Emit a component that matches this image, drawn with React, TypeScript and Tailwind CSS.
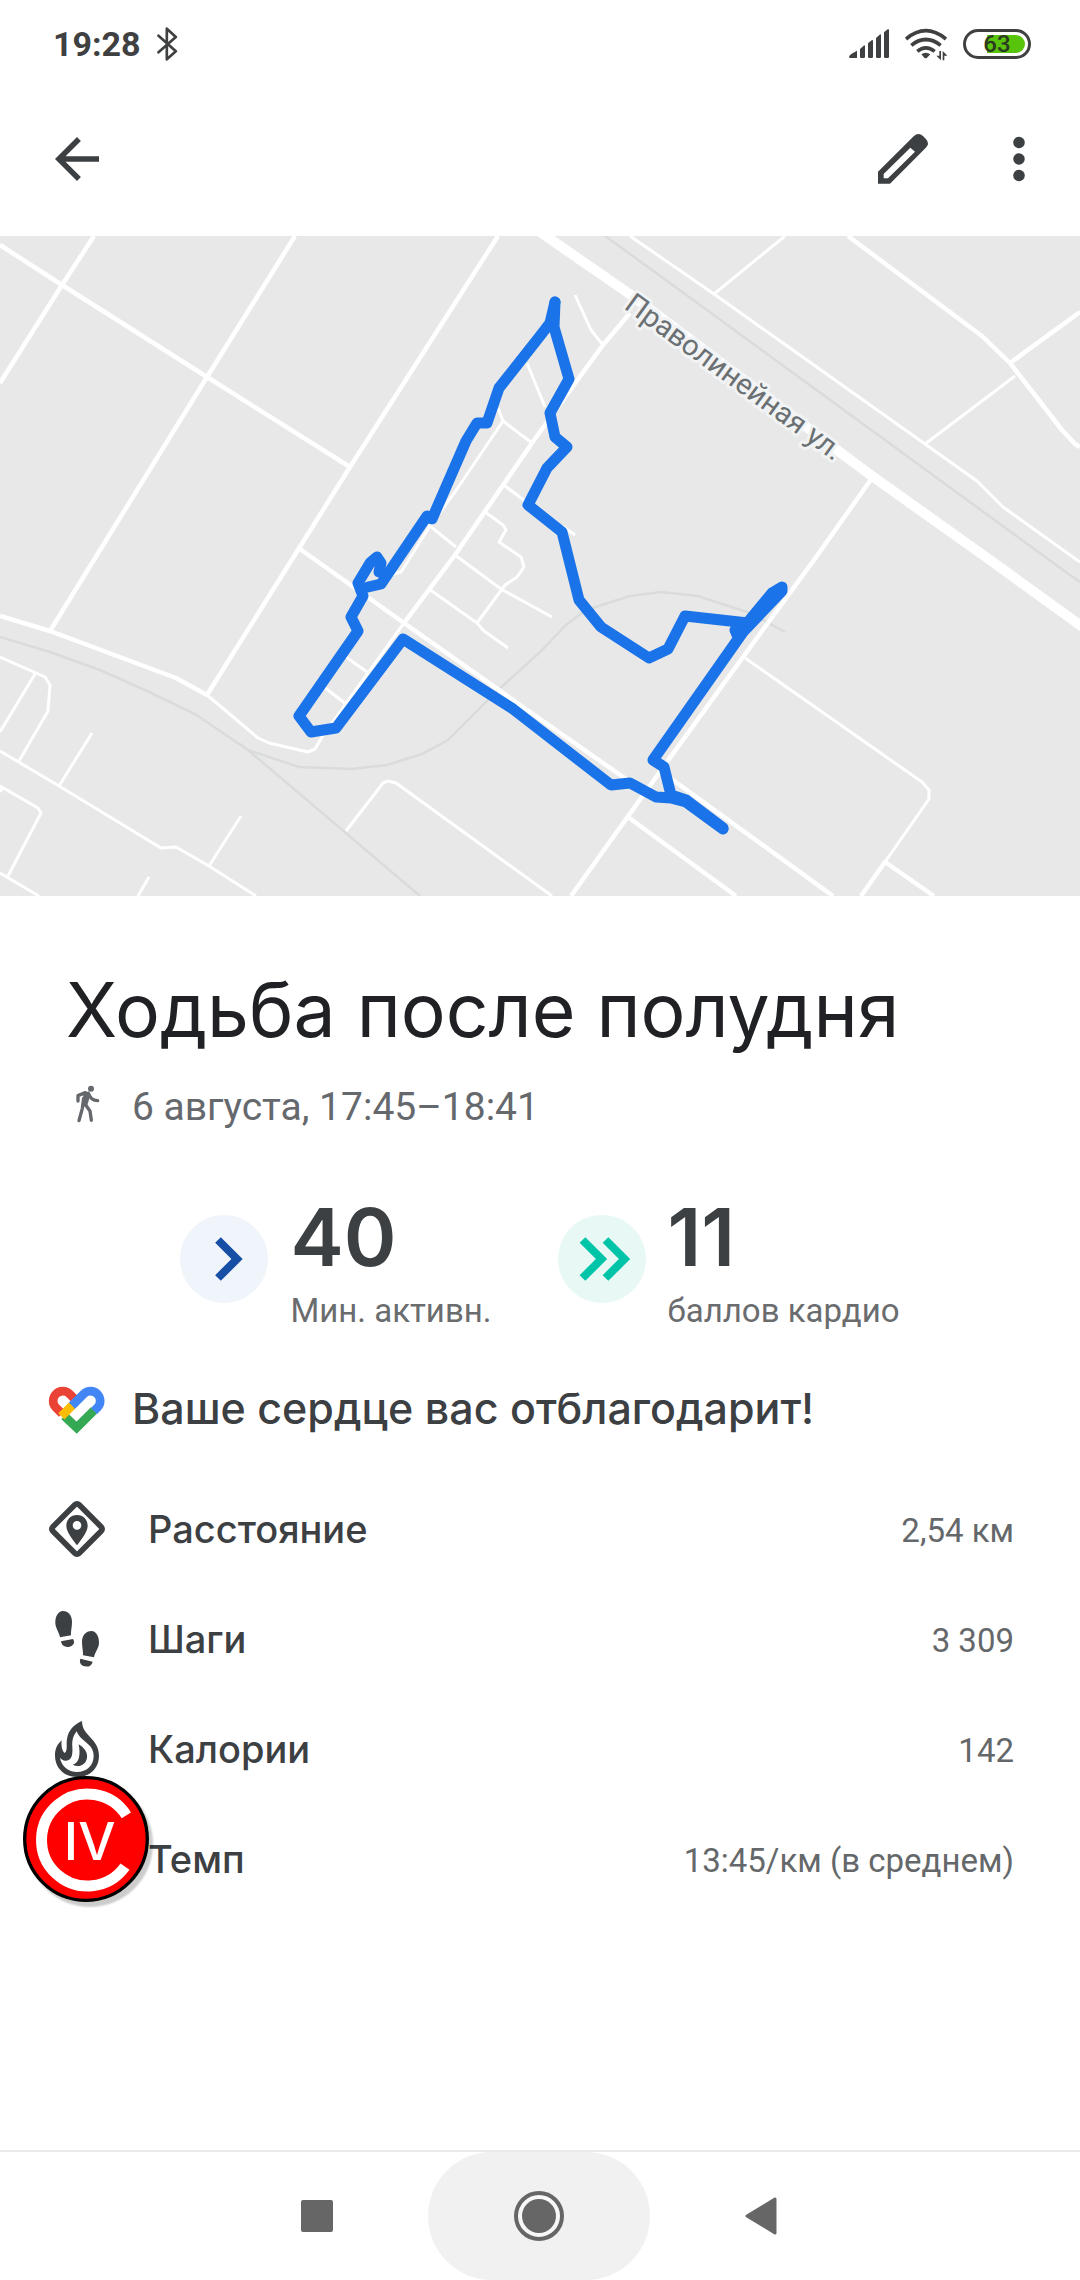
import type { ReactNode } from "react";

const RAILS = [
  "M605 236L659 275L874 432L1063 570L1080 582",
  "M0 637L50 652L100 670L147 691L195 714L248 750L420 896",
  "M240 744L248 750L299 767L351 769L387 765L422 754L448 740L496 692L540 652L566 625L586 610L630 596L661 592L698 596L716 602L750 613L785 632",
];

const ALLEYS = [
  "M630 236L714 294L925 444L977 481L1003 507L1080 562",
  "M785 236L714 294",
  "M1015 376L925 444",
  "M575 295L591 330L603 345",
  "M527 363L545 407",
  "M498 408L503 421L532 443",
  "M503 421L455 492L430 526L401 572L389 575",
  "M430 526L456 547",
  "M505 486L525 501",
  "M485 512L503 525L506 530L499 542L521 557L524 567L517 577L505 585L477 623",
  "M455 555L501 589L552 617",
  "M429 589L477 623L484 631L508 648",
  "M346 657L367 672",
  "M324 687L346 704",
  "M562 526L575 535",
  "M346 831L383 783L388 781L396 783L552 896",
  "M745 658L922 782L929 790L929 799L885 862",
  "M0 657L36 673L45 677L50 685L48 711L19 761",
  "M35 674L0 732",
  "M0 751L59 786L161 848L176 847L209 866L256 896",
  "M92 733L59 786",
  "M241 816L209 866",
  "M0 786L38 808L41 813L8 876",
  "M3 787L0 792",
  "M0 873L39 896",
  "M149 877L138 896",
  "M404 623L322 737L315 749L308 752L269 743L258 738L207 695",
];

const STREETS = [
  "M0 245L62 285L207 377L350 467",
  "M94 236L62 285L0 383",
  "M295 236L207 377L50 631",
  "M498 236L350 467L207 695",
  "M300 549L404 623L540 719L656 800",
  "M848 236L982 336L1010 363L1062 430L1075 444L1080 447",
  "M1010 363L1080 312",
  "M630 313L603 345L576 382L532 443L455 555L404 623",
  "M0 616L50 631L176 678L207 695",
  "M872 478L814 560L743 657L659 773L571 896",
  "M659 770L833 896",
  "M628 817L736 896",
  "M934 896L885 862L861 896",
];

const ROUTES = [
  "M555 302L550 323L540 336L499 388L487 423L477 423L466 441L432 519L427 516L381 584L368 587",
  "M379 572L381 563L377 557L370 563L358 583L363 596L351 617L358 631L299 716L311 732L336 728L403 639L513 709L611 785L630 783L656 797L671 798L686 802L723 829",
  "M723 828L686 800L671 795L664 767L653 760L743 632L782 591L782 587L772 593L748 622L738 637L735 630L748 623L685 616L668 649L649 658L601 627L579 600L569 560L562 532L528 505L547 468L567 447L555 437L550 413L569 379L554 327L555 302",
];

function RouteMap() {
  return (
    <svg viewBox="0 236 1080 660" className="block w-full bg-[#e8e8e8]" role="img" aria-label="Маршрут прогулки" fill="none">
      <g stroke="#d9dcdb" strokeWidth="2.5">
        {RAILS.map((d) => <path key={d} d={d} />)}
      </g>
      <g stroke="#fff" strokeWidth="3" strokeLinejoin="round">
        {ALLEYS.map((d) => <path key={d} d={d} />)}
      </g>
      <g stroke="#fff" strokeWidth="4.5" strokeLinejoin="round">
        {STREETS.map((d) => <path key={d} d={d} />)}
      </g>
      <path d="M540 232L631 295L833 447L872 476L990 560L1084 628" stroke="#fff" strokeWidth="10" />
      <g stroke="#1a73e8" strokeWidth="11" strokeLinejoin="round" strokeLinecap="round">
        {ROUTES.map((d) => <path key={d} d={d} />)}
      </g>
      <text
        transform="translate(623 308) rotate(36)"
        fontFamily="Roboto, sans-serif"
        fontSize="29"
        fill="#6b7073"
        stroke="#f1f3f4"
        strokeWidth="6"
        strokeLinejoin="round"
        paintOrder="stroke"
      >
        Праволинейная ул.
      </text>
    </svg>
  );
}

function StatusBar() {
  return (
    <div className="flex h-[82px] items-center justify-between pt-1.5 pr-[49px] pl-[53px] text-[#3f4041]">
      <div className="flex items-center gap-4">
        <span className="text-[34px] leading-10 font-bold">19:28</span>
        <svg viewBox="0 0 62 102" className="h-[34px] w-[21px]" fill="none" stroke="currentColor" strokeWidth="8" strokeLinejoin="round" strokeLinecap="round" aria-label="Bluetooth">
          <path d="M4 26L56 73L29 97V5L56 30L4 76" />
        </svg>
      </div>
      <div className="flex items-center gap-4">
        <svg viewBox="0 0 120 90" className="h-[30px] w-10" fill="currentColor" aria-label="Сигнал">
          <path d="M0 84Q0 80 8 74L24 65V87H4Q0 87 0 84Z" />
          <path d="M33 60L44 50Q48 47 48 53V83Q48 87 44 87H37Q33 87 33 83Z" />
          <path d="M57 43L68 34Q72 31 72 37V83Q72 87 68 87H61Q57 87 57 83Z" />
          <path d="M81 27L92 17Q96 14 96 20V83Q96 87 92 87H85Q81 87 81 83Z" />
          <path d="M105 10L116 1Q120 -2 120 5V83Q120 87 116 87H109Q105 87 105 83Z" />
        </svg>
        <svg viewBox="0 0 126 102" className="h-[34px] w-[42px]" aria-label="Wi-Fi">
          <g fill="none" stroke="currentColor" strokeWidth="11">
            <path d="M3 36Q62 -14 123 36" />
            <path d="M19 55Q62 20 107 55" />
            <path d="M37 73Q62 52 89 73" />
          </g>
          <g fill="currentColor">
            <path d="M49 82Q62 72 76 82L66 92Q62 95 58 92Z" />
            <path d="M103 72H108V100L94 86H103Z" />
            <path d="M118 100H113V72L127 86H118Z" />
          </g>
        </svg>
        <div className="relative flex h-[30px] w-[68px] items-center justify-end rounded-full border-3 border-current p-[3px]" role="img" aria-label="Батарея 63%">
          <span className="h-[18px] w-[38px] rounded-r-full bg-[#58c40c]" />
          <span className="absolute inset-0 flex items-center justify-center text-[24px] leading-6 font-medium text-[#2b3a22]">63</span>
        </div>
      </div>
    </div>
  );
}

function Toolbar() {
  return (
    <header className="flex h-[154px] items-center justify-between pr-[28px] pl-11 text-[#3c4043]">
      <button type="button" aria-label="Назад">
        <svg viewBox="0 0 24 24" className="size-[66px]" fill="currentColor">
          <path d="M20 11H7.83l5.59-5.59L12 4l-8 8 8 8 1.41-1.41L7.83 13H20v-2z" />
        </svg>
      </button>
      <div className="flex items-center gap-[50px]">
        <button type="button" aria-label="Изменить">
          <svg viewBox="-24 -24 198 198" className="size-[66px]" fill="currentColor" fillRule="evenodd">
            <path d="M0 149V113L107 7Q121 -6 135 6L143 14Q157 28 142 43L36 149ZM17 120V133H30L111 53L97 41Z" />
          </svg>
        </button>
        <button type="button" aria-label="Ещё">
          <svg viewBox="0 0 24 24" className="size-[66px]" fill="currentColor">
            <circle cx="12" cy="6" r="2.1" />
            <circle cx="12" cy="12" r="2.1" />
            <circle cx="12" cy="18" r="2.1" />
          </svg>
        </button>
      </div>
    </header>
  );
}

function WalkIcon() {
  return (
    <svg viewBox="108 45 132 132" className="size-11" aria-hidden="true">
      <circle cx="183" cy="56" r="9" fill="currentColor" />
      <path d="M158 67L176 65L182 74L171 108L156 112L160 78Z" fill="currentColor" />
      <g fill="none" stroke="currentColor" strokeWidth="10" strokeLinecap="round" strokeLinejoin="round">
        <path d="M144 93V77L166 68" />
        <path d="M161 85L157 115L147 152" />
        <path d="M165 102L180 123L184 151" />
        <path d="M175 70Q182 92 203 92" />
      </g>
    </svg>
  );
}

function HeartLogo() {
  return (
    <svg viewBox="42 912 198 198" className="size-[66px]" fill="none" strokeWidth="26" aria-hidden="true">
      <path d="M103 1035L140 1070L192 1018" stroke="#34a853" />
      <path d="M96 1028L77.500 1009.500A29 29 0 0 1 118.500 968.500L136 986" stroke="#ea4335" />
      <path d="M124 1006L161.500 968.500A29 29 0 0 1 202.500 1009.500L192 1020" stroke="#4285f4" />
      <path d="M126 1004L94 1036" stroke="#fbbc04" />
    </svg>
  );
}

function ActivePointIcon({ double = false }: { double?: boolean }) {
  return (
    <svg viewBox="0 0 88 88" className="mt-[18px] size-[88px] shrink-0" fill="none" strokeWidth="8" aria-hidden="true">
      <circle cx="44" cy="44" r="44" fill={double ? "#e8f9f5" : "#f0f4fb"} />
      {double ? (
        <path d="M24.500 25L43.500 44L24.500 63M47.500 25L66.500 44L47.500 63" stroke="#00c4a7" />
      ) : (
        <path d="M38 25L57 44L38 63" stroke="#174ea6" />
      )}
    </svg>
  );
}

function Stat({ value, label, double }: { value: string; label: string; double?: boolean }) {
  return (
    <div className="flex items-start gap-[22px]">
      <ActivePointIcon double={double} />
      <div className="flex flex-col gap-3">
        <span className="font-[Inter] text-[80px] leading-[80px] font-semibold text-[#3c4043]">{value}</span>
        <span className="text-[33px] leading-[44px] text-[#6a6c6e]">{label}</span>
      </div>
    </div>
  );
}

const distanceIcon = (
  <svg viewBox="0 0 198 198" className="size-[66px]" aria-hidden="true">
    <rect x="43" y="43" width="112" height="112" rx="9" transform="rotate(45 99 99)" fill="none" stroke="currentColor" strokeWidth="17" />
    <path fillRule="evenodd" fill="currentColor" d="M99 57C80 57 67 71 67 89C67 108 85 128 99 148C113 128 131 108 131 89C131 71 118 57 99 57ZM99 75A13 13 0 1 1 99 101A13 13 0 1 1 99 75Z" />
  </svg>
);

const stepsIcon = (
  <svg viewBox="0 0 198 198" className="size-[66px]" fill="currentColor" aria-hidden="true">
    <path d="M57 15C42 15 33 32 34 52C35 68 45 78 48 94L81 88C80 75 84 65 84 48C84 28 73 15 57 15Z" />
    <path d="M51 106L87 99C94 109 88 119 77 122C64 125 53 120 51 106Z" />
    <path d="M142 75C157 75 166 92 165 112C164 128 153 138 150 154L117 148C118 135 114 125 114 108C114 88 126 75 142 75Z" />
    <path d="M109 158L146 167C143 179 133 184 123 181C111 179 105 170 109 158Z" />
  </svg>
);

const flameIcon = (
  <svg viewBox="0 0 198 198" className="size-[66px]" aria-hidden="true">
    <path d="M114 15C114 61 165 66 165 119C165 157 137 183 99 183C60 183 33 156 33 118C33 100 39 86 53 73C51 90 54 105 62 111C72 103 66 88 69 69C73 42 91 25 114 15ZM98 46C86 62 84 75 85 92C86 111 86 132 66 134C58 135 52 130 48 125C52 151 73 167 99 168C128 167 149 149 149 119C149 82 109 77 98 46Z" fill="currentColor" fillRule="evenodd" />
    <path d="M104 85C119 94 132 109 129 125C126 146 105 156 86 146C106 142 110 115 104 85Z" fill="currentColor" />
  </svg>
);

const paceIcon = (
  <svg viewBox="0 0 24 24" className="size-[66px]" fill="none" stroke="currentColor" strokeWidth="2" aria-hidden="true">
    <circle cx="12" cy="12" r="7" />
    <path d="M12 8v5" />
  </svg>
);

const METRICS: { label: string; value: string; icon: ReactNode }[] = [
  { label: "Расстояние", value: "2,54 км", icon: distanceIcon },
  { label: "Шаги", value: "3 309", icon: stepsIcon },
  { label: "Калории", value: "142", icon: flameIcon },
  { label: "Темп", value: "13:45/км (в среднем)", icon: paceIcon },
];

function FloatingBubble() {
  return (
    <button type="button" aria-label="IV" className="absolute bottom-3 left-[23px] size-[126px] rounded-full shadow-[4px_5px_2px_rgba(0,0,0,0.2)]">
      <svg viewBox="0 0 378 378" className="size-full">
        <circle cx="189" cy="189" r="184" fill="#f00" stroke="#000" strokeWidth="10" />
        <path d="M310 118A138 138 0 1 0 306 272" fill="none" stroke="#fff" strokeWidth="33" />
        <text x="200" y="251" textAnchor="middle" fontFamily="Inter, sans-serif" fontWeight="500" fontSize="158" fill="#fff">IV</text>
      </svg>
    </button>
  );
}

function NavBar() {
  return (
    <nav className="mt-auto flex h-[130px] items-center justify-center border-t-2 border-[#e9e9e9] pr-[3px] text-[#666]">
      <button type="button" aria-label="Недавние" className="flex h-full w-[222px] items-center justify-center">
        <span className="size-8 rounded-xs bg-current" />
      </button>
      <button type="button" aria-label="Домой" className="flex h-full w-[222px] items-center justify-center rounded-full bg-[#f1f1f1]">
        <span className="flex size-[50px] items-center justify-center rounded-full border-4 border-current bg-[#f7f7f7]">
          <span className="size-[34px] rounded-full bg-current" />
        </span>
      </button>
      <button type="button" aria-label="Назад" className="flex h-full w-[222px] items-center justify-center">
        <svg viewBox="0 0 32 38" className="h-[38px] w-8" fill="currentColor" stroke="currentColor" strokeWidth="3" strokeLinejoin="round">
          <path d="M2 19L30 2V36Z" />
        </svg>
      </button>
    </nav>
  );
}

export default function App() {
  return (
    <div className="flex min-h-screen flex-col bg-white font-[Roboto,sans-serif]">
      <StatusBar />
      <Toolbar />
      <RouteMap />
      <main className="flex flex-col pb-16">
        <h1 className="px-[66px] pt-[66px] font-[Inter] text-[75px] leading-[96px] text-[#202124]">Ходьба после полудня</h1>
        <p className="mt-[25px] flex items-center gap-[22px] px-[66px] text-[39px] leading-[48px] text-[#65686c]">
          <WalkIcon />
          6 августа, 17:45–18:41
        </p>
        <section className="mt-[66px] flex justify-center gap-[66px]">
          <Stat value="40" label="Мин. активн." />
          <Stat value="11" label="баллов кардио" double />
        </section>
        <h2 className="mt-[42px] flex items-center gap-[22px] px-11 font-[Inter] text-[43px] leading-[56px] font-medium text-[#3c4043]">
          <HeartLogo />
          Ваше сердце вас отблагодарит!
        </h2>
        <div className="relative mt-[33px]">
          <dl>
            {METRICS.map(({ label, value, icon }) => (
              <div key={label} className="flex h-[110px] items-center justify-between pr-[66px] pl-11">
                <dt className="flex items-center gap-[38px] font-[Inter] text-[38px] leading-[48px] font-medium text-[#3c4043]">
                  {icon}
                  {label}
                </dt>
                <dd className="pt-1 text-[33px] leading-[44px] text-[#65686a]">{value}</dd>
              </div>
            ))}
          </dl>
          <FloatingBubble />
        </div>
      </main>
      <NavBar />
    </div>
  );
}
